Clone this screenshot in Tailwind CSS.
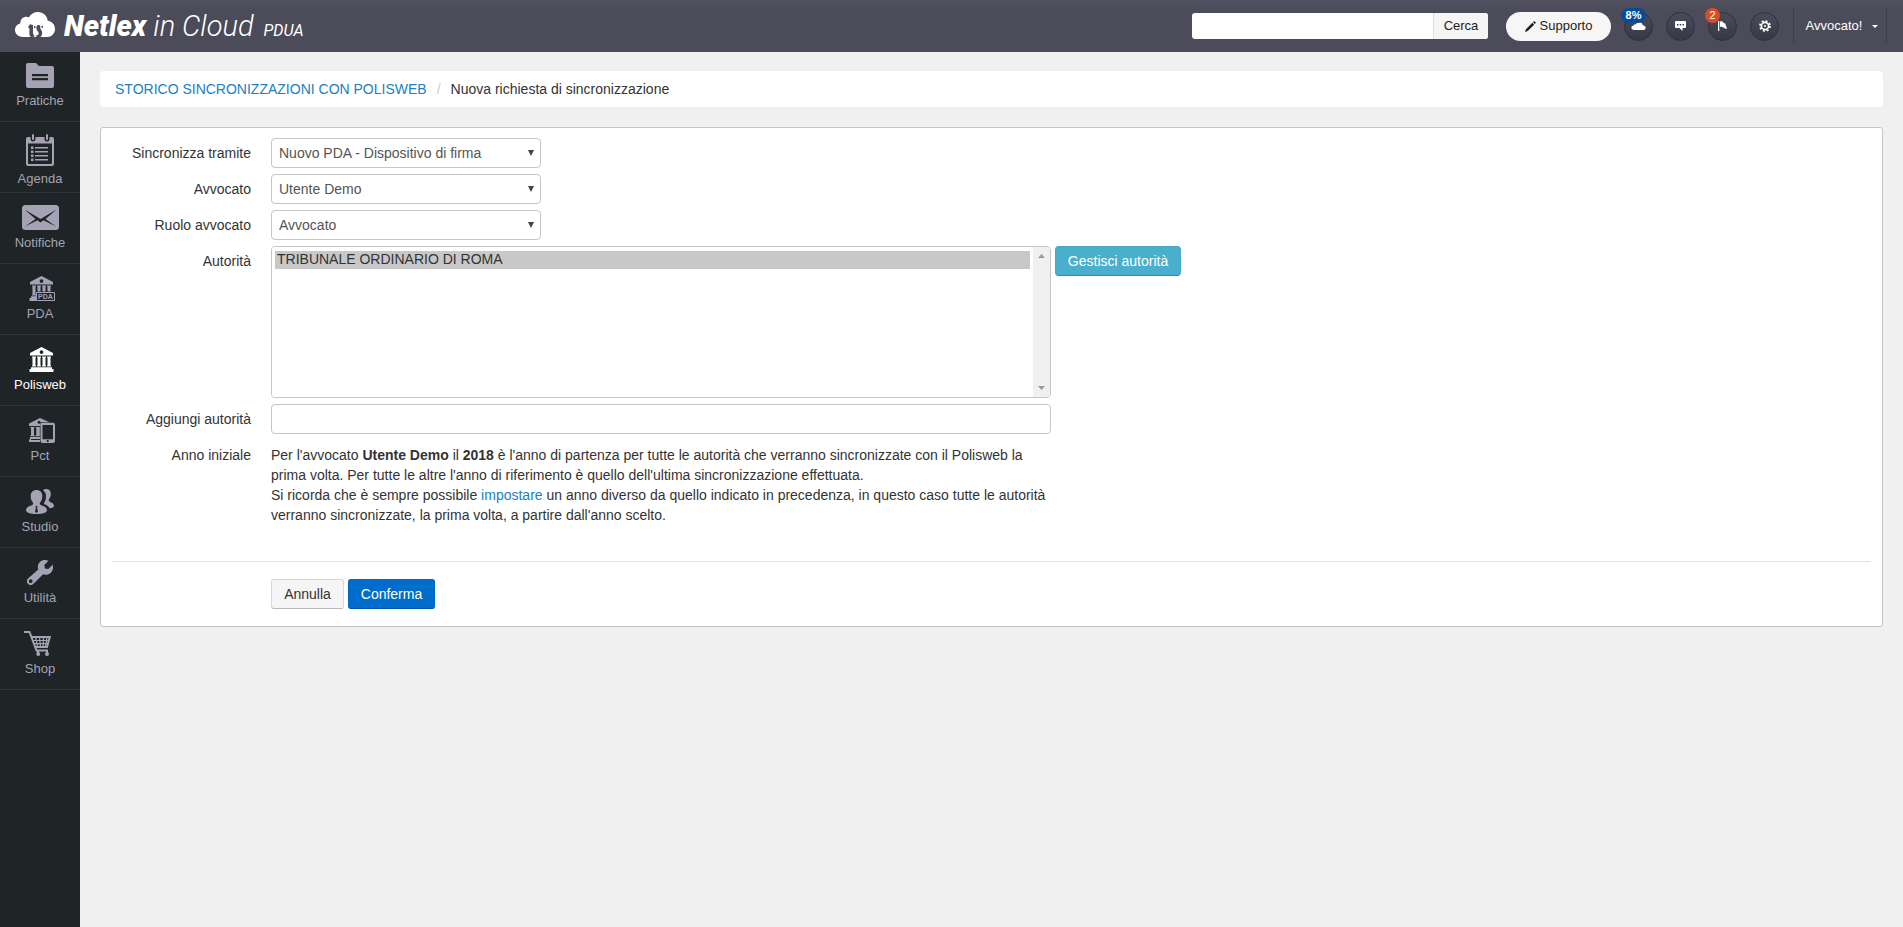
<!DOCTYPE html>
<html lang="it">
<head>
<meta charset="utf-8">
<title>Netlex in Cloud - Nuova richiesta di sincronizzazione</title>
<script src="https://cdn.jsdelivr.net/npm/@tailwindcss/browser@4"></script>
</head>
<body class="flex min-h-screen flex-col bg-[#f0f0f0] font-['Liberation_Sans',Arial,sans-serif] text-sm leading-5 text-[#333]">

<svg class="hidden" aria-hidden="true">
  <symbol id="i-temple" viewBox="0 0 25 25">
    <path fill-rule="evenodd" d="M12.5 0 24 6v2.500H1V6zM12.500 3.200a1.900 1.900 0 1 0 0 3.800 1.900 1.900 0 0 0 0-3.800z"/>
    <path d="M3 9.500h4v1h-.5v8H7v1H3v-1h.5v-8H3zM8 9.500h4v1h-.5v8h.5v1H8v-1h.5v-8H8zM13 9.500h4v1h-.5v8h.5v1h-4v-1h.5v-8H13zM18 9.500h4v1h-.5v8h.5v1h-4v-1h.5v-8H18zM2 20.300h21V22h1.500v3H.5v-3H2z"/>
  </symbol>
</svg>

<header class="flex h-[52px] items-center justify-between bg-linear-to-b from-[#51515f] via-[#4b4b59] via-20% to-[#4b4b59] pr-4 pl-[15px] text-[13px]">
  <a href="#" class="flex items-center font-[Roboto,sans-serif] text-white italic" aria-label="Netlex in Cloud PDUA">
    <svg class="mr-[9px] mb-1 h-[25px] w-[40px]" viewBox="0 0 40 25" aria-hidden="true">
      <path fill="#fff" d="M8 25C3.500 25 0 22 0 18c0-3.400 2.200-5.800 5.300-6.500C5.200 7.500 8 4.800 11.500 4.800c.9 0 1.700.2 2.500.5C15.700 2 19 0 22.800 0c5.400 0 9.400 3.700 9.900 8.800C37 9.300 40 12.700 40 17c0 4.700-3.600 8-8 8z"/>
      <path fill="#4b4b59" d="M15 12.200l3 .8v7.500c0 1.600.5 2.500 1.700 3.400l-1.500 1.100h-2.400c-1-.8-1.400-2-1.400-3.500V16l-1.400-.2 1-2.300zM19 14l1.300.2.400 2-1.700-.2zM22 13.500c1.200-.7 2.400-.6 3.500.2-.8 1.800-.2 3 .8 4.300 1.400 2 1.300 5-.8 7h-4l-.8-1.600c2 .2 3.200-.7 2.900-2.400-.2-1.400-1.400-2-1.900-3.400-.4-1.300-.4-2.800.3-4.100zM26.500 14l1.500-.3.200 1.800-1.700.5z"/>
    </svg>
    <span class="text-[29px] leading-8 font-black">Netlex</span>
    <span class="ml-[7px] text-[29px] leading-8 font-light">in Cloud</span>
    <span class="mt-[10px] ml-[10px] text-base">PDUA</span>
  </a>

  <div class="flex items-center">
    <form class="flex h-[26px] w-[296px] overflow-hidden rounded-[3px] bg-white">
      <input type="text" aria-label="Cerca" class="min-w-0 flex-1 px-2 outline-none">
      <button type="button" class="w-[55px] border-l border-[#ddd] bg-[#f5f5f5] text-[#222]">Cerca</button>
    </form>
    <button type="button" class="ml-[18px] flex h-[29px] w-[105px] items-center justify-center gap-1 rounded-full bg-[#f6f6f6] text-[#222]">
      <svg class="size-[11px]" viewBox="0 0 12 12" fill="#222" aria-hidden="true"><path d="M0 12l1-3L8 2l2 2L3 11zM8.700 1.300 10 0 12 2l-1.300 1.300z"/></svg>
      Supporto
    </button>
    <nav class="ml-[13px] flex gap-[13px]" aria-label="Strumenti">
      <button type="button" aria-label="Spazio" class="relative flex size-[29px] items-center justify-center rounded-full border border-[#2f3140] bg-linear-to-b from-[#4a4c5b] to-[#363846]">
        <svg class="h-[8px] w-[15px]" viewBox="0 0 16 9" fill="#fff" aria-hidden="true"><path d="M3 9C1.300 9 0 8 0 6.500S1.200 4.200 2.700 4C2.900 2.800 4 2.300 5 2.700 5.600 1 7 0 8.700 0c2.200 0 3.800 1.500 4 3.600C14.600 3.700 16 4.800 16 6.400 16 8 14.800 9 13.200 9z"/></svg>
        <span class="absolute -top-[5px] -left-[4px] flex h-[15px] w-[25px] items-center justify-center rounded-full bg-[#0a4b99] text-[11px] font-bold text-white">8%</span>
      </button>
      <button type="button" aria-label="Messaggi" class="flex size-[29px] items-center justify-center rounded-full border border-[#2f3140] bg-linear-to-b from-[#4a4c5b] to-[#363846]">
        <svg class="h-[10px] w-[11px]" viewBox="0 0 11 10" aria-hidden="true"><path fill="#fff" d="M1 0h9q1 0 1 1v5q0 1-1 1H7.500v3L4.500 7H1Q0 7 0 6V1q0-1 1-1z"/><path fill="#3f4150" d="M2 3h1.500v1.500H2zM4.700 3h1.500v1.500H4.700zM7.500 3H9v1.500H7.500z"/></svg>
      </button>
      <button type="button" aria-label="Avvisi" class="relative flex size-[29px] items-center justify-center rounded-full border border-[#2f3140] bg-linear-to-b from-[#4a4c5b] to-[#363846]">
        <svg class="h-[10px] w-[9px]" viewBox="0 0 9 10" aria-hidden="true"><path fill="#fff" d="M0 0h1.300v10H0zM2 .5c1.500-.7 2.500-.4 3.300.9.6.9 1.300 1.100 1.700.7L9 7.500C7.300 8 6.300 7.500 5.400 6.600 4.400 5.700 3.300 5.600 2 6.200z"/></svg>
        <span class="absolute -top-[5px] -left-[4px] flex size-[15px] items-center justify-center rounded-full bg-[#dd4b25] text-[11px] text-white">2</span>
      </button>
      <button type="button" aria-label="Impostazioni" class="flex size-[29px] items-center justify-center rounded-full border border-[#2f3140] bg-linear-to-b from-[#4a4c5b] to-[#363846]">
        <svg class="size-[12px]" viewBox="0 0 12 12" fill="none" stroke="#fff" aria-hidden="true"><circle cx="6" cy="6" r="3.600" stroke-width="1.600"/><circle cx="6" cy="6" r="5" stroke-width="1.800" stroke-dasharray="1.960 1.960"/><circle cx="6" cy="6" r="1" fill="#fff" stroke="none"/></svg>
      </button>
    </nav>
    <button type="button" class="ml-[14px] flex h-[35px] w-[94px] items-center justify-center gap-[10px] border-x border-[#3d3e4c] pl-1 text-white">
      Avvocato!
      <svg class="h-[3px] w-[6px]" viewBox="0 0 6 3" fill="#fff" aria-hidden="true"><path d="M0 0h6L3 3z"/></svg>
    </button>
  </div>
</header>

<div class="flex flex-1">
  <nav class="w-20 shrink-0 bg-[#1f2427] text-[13px] text-[#a5a3b3]" aria-label="Menu principale">
    <a href="#" class="flex h-[70px] flex-col items-center gap-[3px] border-b border-[#2e3538] pt-[11px]">
      <svg class="h-[25px] w-7" viewBox="0 0 28 25" fill="currentColor" aria-hidden="true"><path fill-rule="evenodd" d="M2 0h8l3 3h13q2 0 2 2v18q0 2-2 2H2q-2 0-2-2V2q0-2 2-2zM6 11v2.200h16V11zM6 15v2.200h16V15z"/></svg>
      Pratiche
    </a>
    <a href="#" class="flex h-[71px] flex-col items-center gap-[3px] border-b border-[#2e3538] pt-3">
      <svg class="h-8 w-7" viewBox="0 0 28 32" fill="currentColor" aria-hidden="true"><path fill-rule="evenodd" d="M2 3h2.500v2a2 2 0 0 0 5 0V3h9v2a2 2 0 0 0 5 0V3H26q2 0 2 2v25q0 2-2 2H2q-2 0-2-2V5q0-2 2-2zM2 9.500V29q0 1 1 1h22q1 0 1-1V9.500z"/><rect x="6" y="0" width="2" height="6" rx="1"/><rect x="20" y="0" width="2" height="6" rx="1"/><path d="M5 12.500h2.500V15H5zM9 13h13v1.500H9zM5 16.500h2.500V19H5zM9 17h13v1.500H9zM5 20.500h2.500V23H5zM9 21h13v1.500H9zM5 24.500h2.500V27H5zM9 25h13v1.500H9z"/></svg>
      Agenda
    </a>
    <a href="#" class="flex h-[71px] flex-col items-center gap-[3px] border-b border-[#2e3538] pt-3">
      <svg class="h-[25px] w-[37px]" viewBox="0 0 37 25" aria-hidden="true"><rect width="37" height="25" rx="3.500" fill="currentColor"/><path fill="#1f2427" d="M2.500 4.500 18.500 14l16-9.500-11 9.500 10.500 7.500-12.500-6.300-3 2.300-3-2.300L3 21.500 13.500 14z"/></svg>
      Notifiche
    </a>
    <a href="#" class="flex h-[71px] flex-col items-center gap-[3px] border-b border-[#2e3538] pt-3">
      <svg class="ml-[3px] h-[25px] w-[26px]" viewBox="0 0 26 25" fill="currentColor" aria-hidden="true"><use href="#i-temple" width="25" height="25"/><path fill="#1f2427" d="M7 15.500h19V25H7z"/><path fill="none" stroke="currentColor" d="M7.500 16.500h18v8h-18z"/><text x="16.500" y="23.200" font-size="7" font-weight="bold" text-anchor="middle">PDA</text></svg>
      PDA
    </a>
    <a href="#" aria-current="page" class="flex h-[71px] flex-col items-center gap-[3px] border-b border-[#2e3538] pt-3 text-white">
      <svg class="ml-[3px] size-[25px]" fill="currentColor" aria-hidden="true"><use href="#i-temple"/></svg>
      Polisweb
    </a>
    <a href="#" class="flex h-[71px] flex-col items-center gap-[3px] border-b border-[#2e3538] pt-3">
      <svg class="ml-[3px] h-[25px] w-[26px]" viewBox="0 0 26 25" fill="currentColor" aria-hidden="true"><path fill-rule="evenodd" d="M11 0l9.500 4.200H11.500V8H0V5.500zM10 2.800a1.500 1.500 0 1 0 0 3 1.500 1.500 0 0 0 0-3z"/><path d="M1.500 9h4v1H5v7h.5v1h-4v-1H2v-7h-.5zM6.800 9h4v9h-4v-1h.5v-7h-.5zM1 18.700h10V21H2v1h9v2H0v-2.500h1z"/><path fill-rule="evenodd" d="M13.500 4.700H24q2 0 2 2V23q0 2-2 2H13.500q-2 0-2-2V6.700q0-2 2-2zM13.500 7v14.300H24V7zM18.700 22a1.100 1.100 0 1 0 0 2.200 1.100 1.100 0 0 0 0-2.200z"/></svg>
      Pct
    </a>
    <a href="#" class="flex h-[71px] flex-col items-center gap-[3px] border-b border-[#2e3538] pt-3">
      <svg class="h-[25px] w-7" viewBox="0 0 28 25" fill="currentColor" aria-hidden="true"><path d="M17 1.300C18 .4 19 0 20.200 0c3 0 4.800 2.200 4.600 5.500-.2 2.300-1 4-2 5 0 1.500.2 2 1.500 2.500 2.200.8 3.700 2.200 3.700 4 0 1.200-1.500 2-4.500 2.200-.8-1.700-2.300-2.900-5-3.900-.5-.3-.7-.7-.5-1.300 1.400-1.800 2-4 2-6.500 0-2.700-1-4.800-3-6.200z"/><path fill-rule="evenodd" d="M10.500 1c3.700 0 6 2.500 5.800 6.200-.1 3-1 5.300-2.500 6.600 0 1.500.3 2.100 2 2.700 3.300 1 5.200 2.600 5.200 4.800 0 2.400-4.300 3.700-10.500 3.700S0 23.700 0 21.300c0-2.200 1.900-3.800 5.200-4.800 1.700-.6 2-1.200 2-2.700C5.700 12.500 4.800 10.200 4.700 7.200 4.500 3.500 6.800 1 10.500 1zM9.300 17l.7 1.700L9 22.500l1.500 1.500 1.500-1.500-1-3.800.7-1.700z"/></svg>
      Studio
    </a>
    <a href="#" class="flex h-[71px] flex-col items-center gap-[3px] border-b border-[#2e3538] pt-3">
      <svg class="h-[25px] w-[26px]" viewBox="0 0 26 25" fill="currentColor" aria-hidden="true"><path fill-rule="evenodd" d="M21.500.8 17.300 5l.6 3.400 3.400.6 4.300-4.200c1 3.300.2 6-1.800 7.900-2.200 2-5 2.500-7.700 1.600L6.500 23.800A3.800 3.800 0 0 1 1 18.400L11.300 9.600c-1-3.300-.3-5.700 1.800-7.800C15.300-.2 18.500-.5 21.500.8zM3.700 19.300a1.900 1.900 0 1 0 0 3.800 1.900 1.900 0 0 0 0-3.800z"/></svg>
      Utilità
    </a>
    <a href="#" class="flex h-[71px] flex-col items-center gap-[3px] border-b border-[#2e3538] pt-3">
      <svg class="mr-1 h-[25px] w-7" viewBox="0 0 28 25" fill="none" stroke="currentColor" aria-hidden="true"><path stroke-width="2" d="M0 1h5.500l7 18.500H24M6.500 6h19.300L23 16H11"/><path stroke-width="1.200" d="M8 9.500h17M9.500 12.700h15M11.500 6l2.200 10M15.500 6l1 10M19.500 6l-.4 10M23 6l-1.500 10"/><circle cx="14.200" cy="23" r="2" fill="currentColor" stroke="none"/><circle cx="23" cy="23" r="2" fill="currentColor" stroke="none"/><path stroke-width="2" d="M14 19v4M23 19v4"/></svg>
      Shop
    </a>
  </nav>

  <main class="min-w-0 flex-1 px-5 pt-[19px]">
    <nav class="flex h-9 items-center rounded-[4px] bg-white px-[15px]" aria-label="Percorso">
      <a href="#" class="text-[#2080c0]">STORICO SINCRONIZZAZIONI CON POLISWEB</a>
      <span class="px-[10px] text-[#ccc]">/</span>
      <span>Nuova richiesta di sincronizzazione</span>
    </nav>

    <form class="mt-5 rounded-[3px] border border-[#c4c4c4] bg-white px-[11px] pt-[10px] pb-[17px]">
      <div class="grid grid-cols-[139px_minmax(0,1fr)] gap-x-5 gap-y-[6px]">
        <label for="tramite" class="pt-[5px] text-right">Sincronizza tramite</label>
        <div class="relative w-[270px]">
          <select id="tramite" class="h-[30px] w-full appearance-none rounded-[4px] border border-[#c6c6c6] bg-white px-[7px] text-[#555]"><option>Nuovo PDA - Dispositivo di firma</option></select>
          <svg class="pointer-events-none absolute top-3 right-[7px] h-[6px] w-[6px]" viewBox="0 0 6 6" fill="#444" aria-hidden="true"><path d="M0 0h6L3 6z"/></svg>
        </div>

        <label for="avvocato" class="pt-[5px] text-right">Avvocato</label>
        <div class="relative w-[270px]">
          <select id="avvocato" class="h-[30px] w-full appearance-none rounded-[4px] border border-[#c6c6c6] bg-white px-[7px] text-[#555]"><option>Utente Demo</option></select>
          <svg class="pointer-events-none absolute top-3 right-[7px] h-[6px] w-[6px]" viewBox="0 0 6 6" fill="#444" aria-hidden="true"><path d="M0 0h6L3 6z"/></svg>
        </div>

        <label for="ruolo" class="pt-[5px] text-right">Ruolo avvocato</label>
        <div class="relative w-[270px]">
          <select id="ruolo" class="h-[30px] w-full appearance-none rounded-[4px] border border-[#c6c6c6] bg-white px-[7px] text-[#555]"><option>Avvocato</option></select>
          <svg class="pointer-events-none absolute top-3 right-[7px] h-[6px] w-[6px]" viewBox="0 0 6 6" fill="#444" aria-hidden="true"><path d="M0 0h6L3 6z"/></svg>
        </div>

        <label for="autorita" class="pt-[5px] text-right">Autorità</label>
        <div class="flex items-start gap-1">
          <div class="flex h-[152px] w-[780px] overflow-hidden rounded-[4px] border border-[#c6c6c6]">
            <select id="autorita" multiple size="8" class="h-full min-w-0 flex-1 appearance-none overflow-hidden bg-white px-[3px] py-1 outline-none">
              <option selected class="h-[18px] min-h-0 bg-[linear-gradient(#c8c8c8,#c8c8c8)] px-[2px] py-0 leading-[17px] text-[#333]">TRIBUNALE ORDINARIO DI ROMA</option>
            </select>
            <div class="flex w-[17px] flex-col items-center justify-between bg-[#f0f0f0] py-[7px]" aria-hidden="true">
              <svg class="h-1 w-[7px]" viewBox="0 0 7 4" fill="#999"><path d="M0 4h7L3.500 0z"/></svg>
              <svg class="h-1 w-[7px]" viewBox="0 0 7 4" fill="#999"><path d="M0 0h7L3.500 4z"/></svg>
            </div>
          </div>
          <button type="button" class="h-[30px] w-[126px] rounded-[4px] border border-[#45a9c7] border-b-[#358ba6] bg-[#49afcd] text-white">Gestisci autorità</button>
        </div>

        <label for="aggiungi" class="pt-[5px] text-right">Aggiungi autorità</label>
        <input id="aggiungi" type="text" class="h-[30px] w-[780px] rounded-[4px] border border-[#c6c6c6] bg-white px-[7px]">

        <span class="pt-[5px] text-right">Anno iniziale</span>
        <p class="w-[780px] pt-[5px]">Per l'avvocato <strong>Utente Demo</strong> il <strong>2018</strong> è l'anno di partenza per tutte le autorità che verranno sincronizzate con il Polisweb la prima volta. Per tutte le altre l'anno di riferimento è quello dell'ultima sincronizzazione effettuata.<br>Si ricorda che è sempre possibile <a href="#" class="text-[#2080c0]">impostare</a> un anno diverso da quello indicato in precedenza, in questo caso tutte le autorità verranno sincronizzate, la prima volta, a partire dall'anno scelto.</p>
      </div>

      <div class="mt-9 flex gap-1 border-t border-[#e2e2e2] pt-[17px] pl-[159px]">
        <button type="button" class="h-[30px] w-[73px] rounded-[3px] border border-[#d8d8d8] border-b-[#b8b8b8] bg-[#f5f5f5]">Annulla</button>
        <button type="submit" class="h-[30px] w-[87px] rounded-[3px] border border-[#0068c4] border-b-[#0055a8] bg-[#006dcc] text-white">Conferma</button>
      </div>
    </form>
  </main>
</div>
</body>
</html>
